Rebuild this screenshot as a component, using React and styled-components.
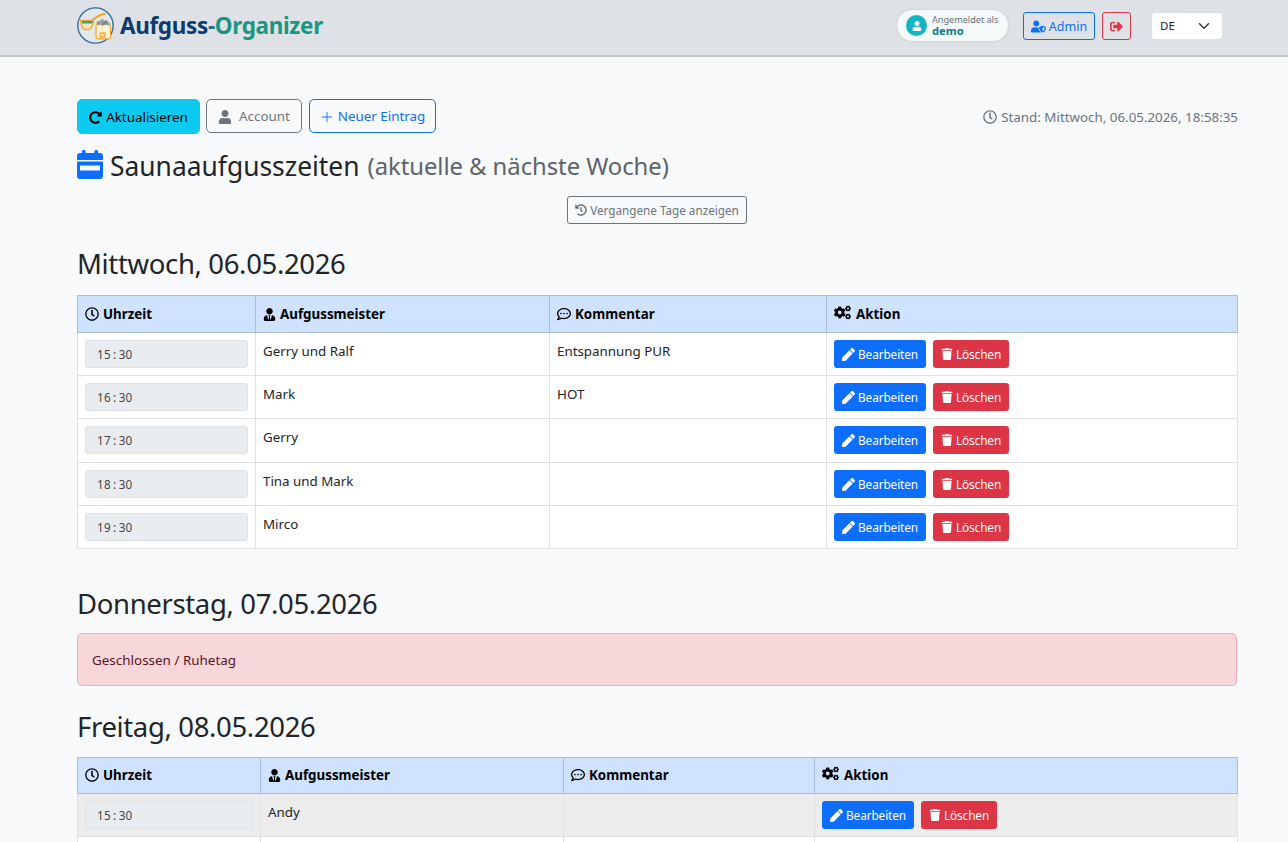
import React from 'react';
import styled, { createGlobalStyle } from 'styled-components';
import { FaRedoAlt, FaUser, FaRegClock, FaHistory, FaUserTie, FaRegCommentDots, FaCogs, FaPen, FaTrash, FaUserShield, FaSignOutAlt } from 'react-icons/fa';
import { BsPlusLg } from 'react-icons/bs';

const Global = createGlobalStyle`
  html, body { margin: 0; padding: 0; background: #f8f9fa; overflow: hidden; }
  body { font-family: "Noto Sans", "Open Sans", sans-serif; font-size: 13.35px; line-height: 21px; color: #212529; }
  * { box-sizing: border-box; }
`;
const Page = styled.div`height: 842px; overflow: hidden;`;
const Nav = styled.header`
  height: 57px; background: #dee2e6; border-bottom: 2px solid #c4c6c8;
  padding: 0 66px 2px 77px; display: flex; align-items: center; justify-content: space-between;
`;
const Brand = styled.div`display: flex; align-items: center; gap: 6px; margin-top: -3px;`;
const BrandText = styled.div`font-size: 22.5px; font-weight: 700; line-height: 30px; margin-top: 2px; color: #0b3a6f; letter-spacing: -0.35px;`;
const Teal = styled.span`color: #1a9680;`;
const Dash = styled.span`color: #2f6f80;`;
const NavRight = styled.div`display: flex; align-items: center; margin-top: -2px;`;
const UserPill = styled.div`
  width: 111px; height: 31px; border-radius: 16px; background: #f4f9fa; box-shadow: 0 0 3px rgba(0,0,0,.13);
  display: flex; align-items: center; padding-left: 9px; gap: 5px; margin-right: 15px;
`;
const Avatar = styled.div`width: 21px; height: 21px; border-radius: 50%; background: #12b5c4; color: #fff; display: flex; align-items: center; justify-content: center; font-size: 10px;`;
const UserText = styled.div`display: flex; flex-direction: column;`;
const UserLabel = styled.span`font-size: 9.2px; line-height: 11px; color: #6c757d; letter-spacing: -0.05px;`;
const UserName = styled.span`font-size: 11.2px; line-height: 12px; font-weight: 700; color: #0e7c86;`;
const NavBtn = styled.div`
  height: 28px; width: ${p => p.$w}px; border: 1px solid ${p => p.$c}; color: ${p => p.$c}; border-radius: 3px; padding-top: 1px;
  display: flex; align-items: center; justify-content: center; gap: 3px; font-size: 12.5px; margin-right: ${p => p.$mr}px;
`;
const Select = styled.div`
  width: 70px; height: 26px; background: #fff; border-radius: 3px; display: flex; align-items: center; justify-content: space-between;
  padding: 0 12px 0 8px; font-size: 11.5px; color: #212529;
`;
const Main = styled.main`padding: 42px 50px 0 77px;`;
const Toolbar = styled.div`display: flex; align-items: flex-start; justify-content: space-between; height: 35px;`;
const BtnGroup = styled.div`display: flex; gap: 6px; align-items: flex-start;`;
const Btn = styled.div`
  height: ${p => p.$h || 34}px; width: ${p => p.$w}px; margin-left: ${p => p.$ml || 0}px; border-radius: 5px; padding-top: 1px; display: flex; align-items: center; justify-content: center; gap: ${p => p.$gap || 5}px;
  background: ${p => p.$bg || 'transparent'}; color: ${p => p.$c}; border: 1px solid ${p => p.$b || p.$c}; font-size: 13.4px;
`;
const Stamp = styled.div`display: flex; align-items: center; gap: 4px; color: #6c757d; font-size: 13.35px; height: 36px;`;
const Title = styled.h1`margin: 14px 0 0; font-size: 26.4px; font-weight: 400; line-height: 37px; display: flex; align-items: center; gap: 7px; height: 37px;`;
const Small = styled.span`font-size: 23.85px; color: #5c636a; letter-spacing: -0.05px; margin-left: 1px;`;
const CalIcon = styled.svg`display: block; flex: none; margin-top: -4px;`;
const PastRow = styled.div`display: flex; justify-content: center; margin: 11px 1px 0 0;`;
const PastBtn = styled.div`
  height: 28px; width: 180px; border: 1px solid #6c757d; border-radius: 3px; color: #6c757d; font-size: 11.7px;
  display: flex; align-items: center; justify-content: center; gap: 3px;
`;
const DayTitle = styled.h2`margin: ${p => p.$mt}px 0 ${p => p.$mb}px; font-size: 27.5px; font-weight: 400; line-height: 38px; letter-spacing: -0.35px;`;
const Table = styled.table`width: 1160px; border-collapse: collapse; table-layout: fixed; font-size: 13.35px;`;
const Th = styled.th`
  height: ${p => p.$h}px; background: #cfe2ff; border: 1px solid #a9bcd8; padding: 0 7px; text-align: left; font-weight: 700; color: #000; white-space: nowrap;
  svg { vertical-align: -2px; margin-right: 4px; }
`;
const Td = styled.td`
  height: ${p => p.$h || 43}px; border: 1px solid #dee2e6; padding: 7px; vertical-align: top; background: ${p => p.$muted ? '#ececec' : '#fff'}; color: #212529;
`;
const TimeBox = styled.div`
  height: 28px; background: #e9ecef; border: 1px solid #dee2e6; border-radius: 3px; padding: 3px 11px 0; font-size: 11.7px; line-height: 21px; letter-spacing: .25px; color: #444;
`;
const NameText = styled.div`line-height: 21px; margin-top: 1px;`;
const Actions = styled.div`display: flex; gap: 7px;`;
const ActBtn = styled.div`
  height: 28px; width: ${p => p.$w}px; border-radius: 3px; background: ${p => p.$bg}; color: #fff; font-size: 11.8px;
  display: flex; align-items: center; justify-content: center; gap: 3px; letter-spacing: -0.1px;
`;
const Alert = styled.div`
  height: 53px; background: #f8d7da; border: 1px solid #f1aeb5; border-radius: 5px; color: #58151c; padding: 1px 14px 0; display: flex; align-items: center; font-size: 13.45px; width: 1160px;
`;

const Logo = () => (
  <svg width="37" height="37" viewBox="0 0 36 36" fill="none">
    <circle cx="18" cy="18" r="17.2" fill="#e4e7ea" stroke="#2f6a9e" strokeWidth="1.3" />
    <path d="M14 14 Q20 8 27 6.5" stroke="#f5a623" strokeWidth="2" strokeLinecap="round" />
    <path d="M3.5 13 H16 Q15.5 22 9.5 22 Q4 22 3.5 13Z" fill="#fbe3b5" stroke="#f5a623" strokeWidth="1.2" />
    <path d="M4.5 13.5 H15.5 L15 16 H5Z" fill="#2ea58f" />
    <rect x="18.5" y="17" width="14" height="14" rx="1.5" fill="#fdf1dc" stroke="#f5a623" strokeWidth="1.1" />
    <circle cx="21" cy="15.5" r="2" fill="#8b9299" /><circle cx="24.5" cy="14" r="2.2" fill="#9aa1a8" /><circle cx="28" cy="15" r="2.2" fill="#7f868d" /><circle cx="30.5" cy="16.5" r="1.6" fill="#9aa1a8" /><circle cx="25" cy="16.5" r="1.7" fill="#858c93" />
    <rect x="22" y="24.5" width="6" height="5.5" fill="#f7b23b" /><rect x="23.5" y="26" width="2.5" height="2.5" fill="#fff3d6" />
  </svg>
);

const Calendar = () => (
  <CalIcon width="26" height="29" viewBox="0 0 26 29" fill="#0d6efd">
    <rect x="5" y="0" width="3.6" height="6" rx="1.4" />
    <rect x="17.4" y="0" width="3.6" height="6" rx="1.4" />
    <path d="M3 3h20a3 3 0 0 1 3 3v4H0V6a3 3 0 0 1 3-3z" />
    <path d="M0 11.5h26V26a3 3 0 0 1-3 3H3a3 3 0 0 1-3-3z" />
    <rect x="3" y="15.5" width="20" height="5" rx="0.8" fill="#f8f9fa" />
  </CalIcon>
);

const Chevron = () => (
  <svg width="12" height="12" viewBox="0 0 16 16" fill="none"><path d="M2 5l6 6 6-6" stroke="#343a40" strokeWidth="2" strokeLinecap="round" strokeLinejoin="round" /></svg>
);

const Head = ({ widths, h }) => (
  <>
    <colgroup>{widths.map((w, i) => <col key={i} style={{ width: w }} />)}</colgroup>
    <thead>
      <tr>
        <Th $h={h}><FaRegClock size={14} />Uhrzeit</Th>
        <Th $h={h}><FaUserTie size={13} />Aufgussmeister</Th>
        <Th $h={h}><FaRegCommentDots size={14} />Kommentar</Th>
        <Th $h={h}><FaCogs size={17} style={{ marginRight: 5 }} />Aktion</Th>
      </tr>
    </thead>
  </>
);

const Row = ({ time, name, note, muted, h }) => (
  <tr>
    <Td $muted={muted} $h={h}><TimeBox>{time}</TimeBox></Td>
    <Td $muted={muted} $h={h}><NameText>{name}</NameText></Td>
    <Td $muted={muted} $h={h}><NameText>{note}</NameText></Td>
    <Td $muted={muted} $h={h}>
      <Actions>
        <ActBtn $bg="#0d6efd" $w={92}><FaPen size={13} />Bearbeiten</ActBtn>
        <ActBtn $bg="#dc3545" $w={76}><FaTrash size={12} />Löschen</ActBtn>
      </Actions>
    </Td>
  </tr>
);

const rows = [
  ['15\u2009:\u200930', 'Gerry und Ralf', 'Entspannung PUR', 43],
  ['16\u2009:\u200930', 'Mark', 'HOT', 43],
  ['17\u2009:\u200930', 'Gerry', '', 44],
  ['18\u2009:\u200930', 'Tina und Mark', '', 43],
  ['19\u2009:\u200930', 'Mirco', '', 43],
];

export default function App() {
  return (
    <Page>
      <Global />
      <Nav>
        <Brand>
          <Logo />
          <BrandText>Aufguss<Dash>-</Dash><Teal>Organizer</Teal></BrandText>
        </Brand>
        <NavRight>
          <UserPill>
            <Avatar><FaUser /></Avatar>
            <UserText><UserLabel>Angemeldet als</UserLabel><UserName>demo</UserName></UserText>
          </UserPill>
          <NavBtn $c="#0d6efd" $w={72} $mr={7}><FaUserShield size={15} />Admin</NavBtn>
          <NavBtn $c="#dc3545" $w={29} $mr={21}><FaSignOutAlt size={13} /></NavBtn>
          <Select>DE<Chevron /></Select>
        </NavRight>
      </Nav>
      <Main>
        <Toolbar>
          <BtnGroup>
            <Btn $bg="#0dcaf0" $c="#000" $b="#0dcaf0" $w={123} $h={35} $gap={4}><FaRedoAlt size={13} />Aktualisieren</Btn>
            <Btn $c="#6c757d" $w={96} $gap={7}><FaUser size={14} />Account</Btn>
            <Btn $c="#0d6efd" $w={127} $gap={4} $ml={1}><BsPlusLg size={14} />Neuer Eintrag</Btn>
          </BtnGroup>
          <Stamp><FaRegClock size={14} />Stand: Mittwoch, 06.05.2026, 18:58:35</Stamp>
        </Toolbar>
        <Title><Calendar />Saunaaufgusszeiten <Small>(aktuelle &amp; nächste Woche)</Small></Title>
        <PastRow><PastBtn><FaHistory size={12} />Vergangene Tage anzeigen</PastBtn></PastRow>
        <DayTitle $mt={21} $mb={12}>Mittwoch, 06.05.2026</DayTitle>
        <Table>
          <Head widths={[178, 294, 277, 411]} h={37} />
          <tbody>{rows.map(r => <Row key={r[0]} time={r[0]} name={r[1]} note={r[2]} h={r[3]} />)}</tbody>
        </Table>
        <DayTitle $mt={36} $mb={10}>Donnerstag, 07.05.2026</DayTitle>
        <Alert>Geschlossen / Ruhetag</Alert>
        <DayTitle $mt={22} $mb={11}>Freitag, 08.05.2026</DayTitle>
        <Table>
          <Head widths={[183, 303, 251, 423]} h={36} />
          <tbody>
            <Row time={'15\u2009:\u200930'} name="Andy" note="" muted />
            <tr><Td /><Td /><Td /><Td /></tr>
          </tbody>
        </Table>
      </Main>
    </Page>
  );
}
